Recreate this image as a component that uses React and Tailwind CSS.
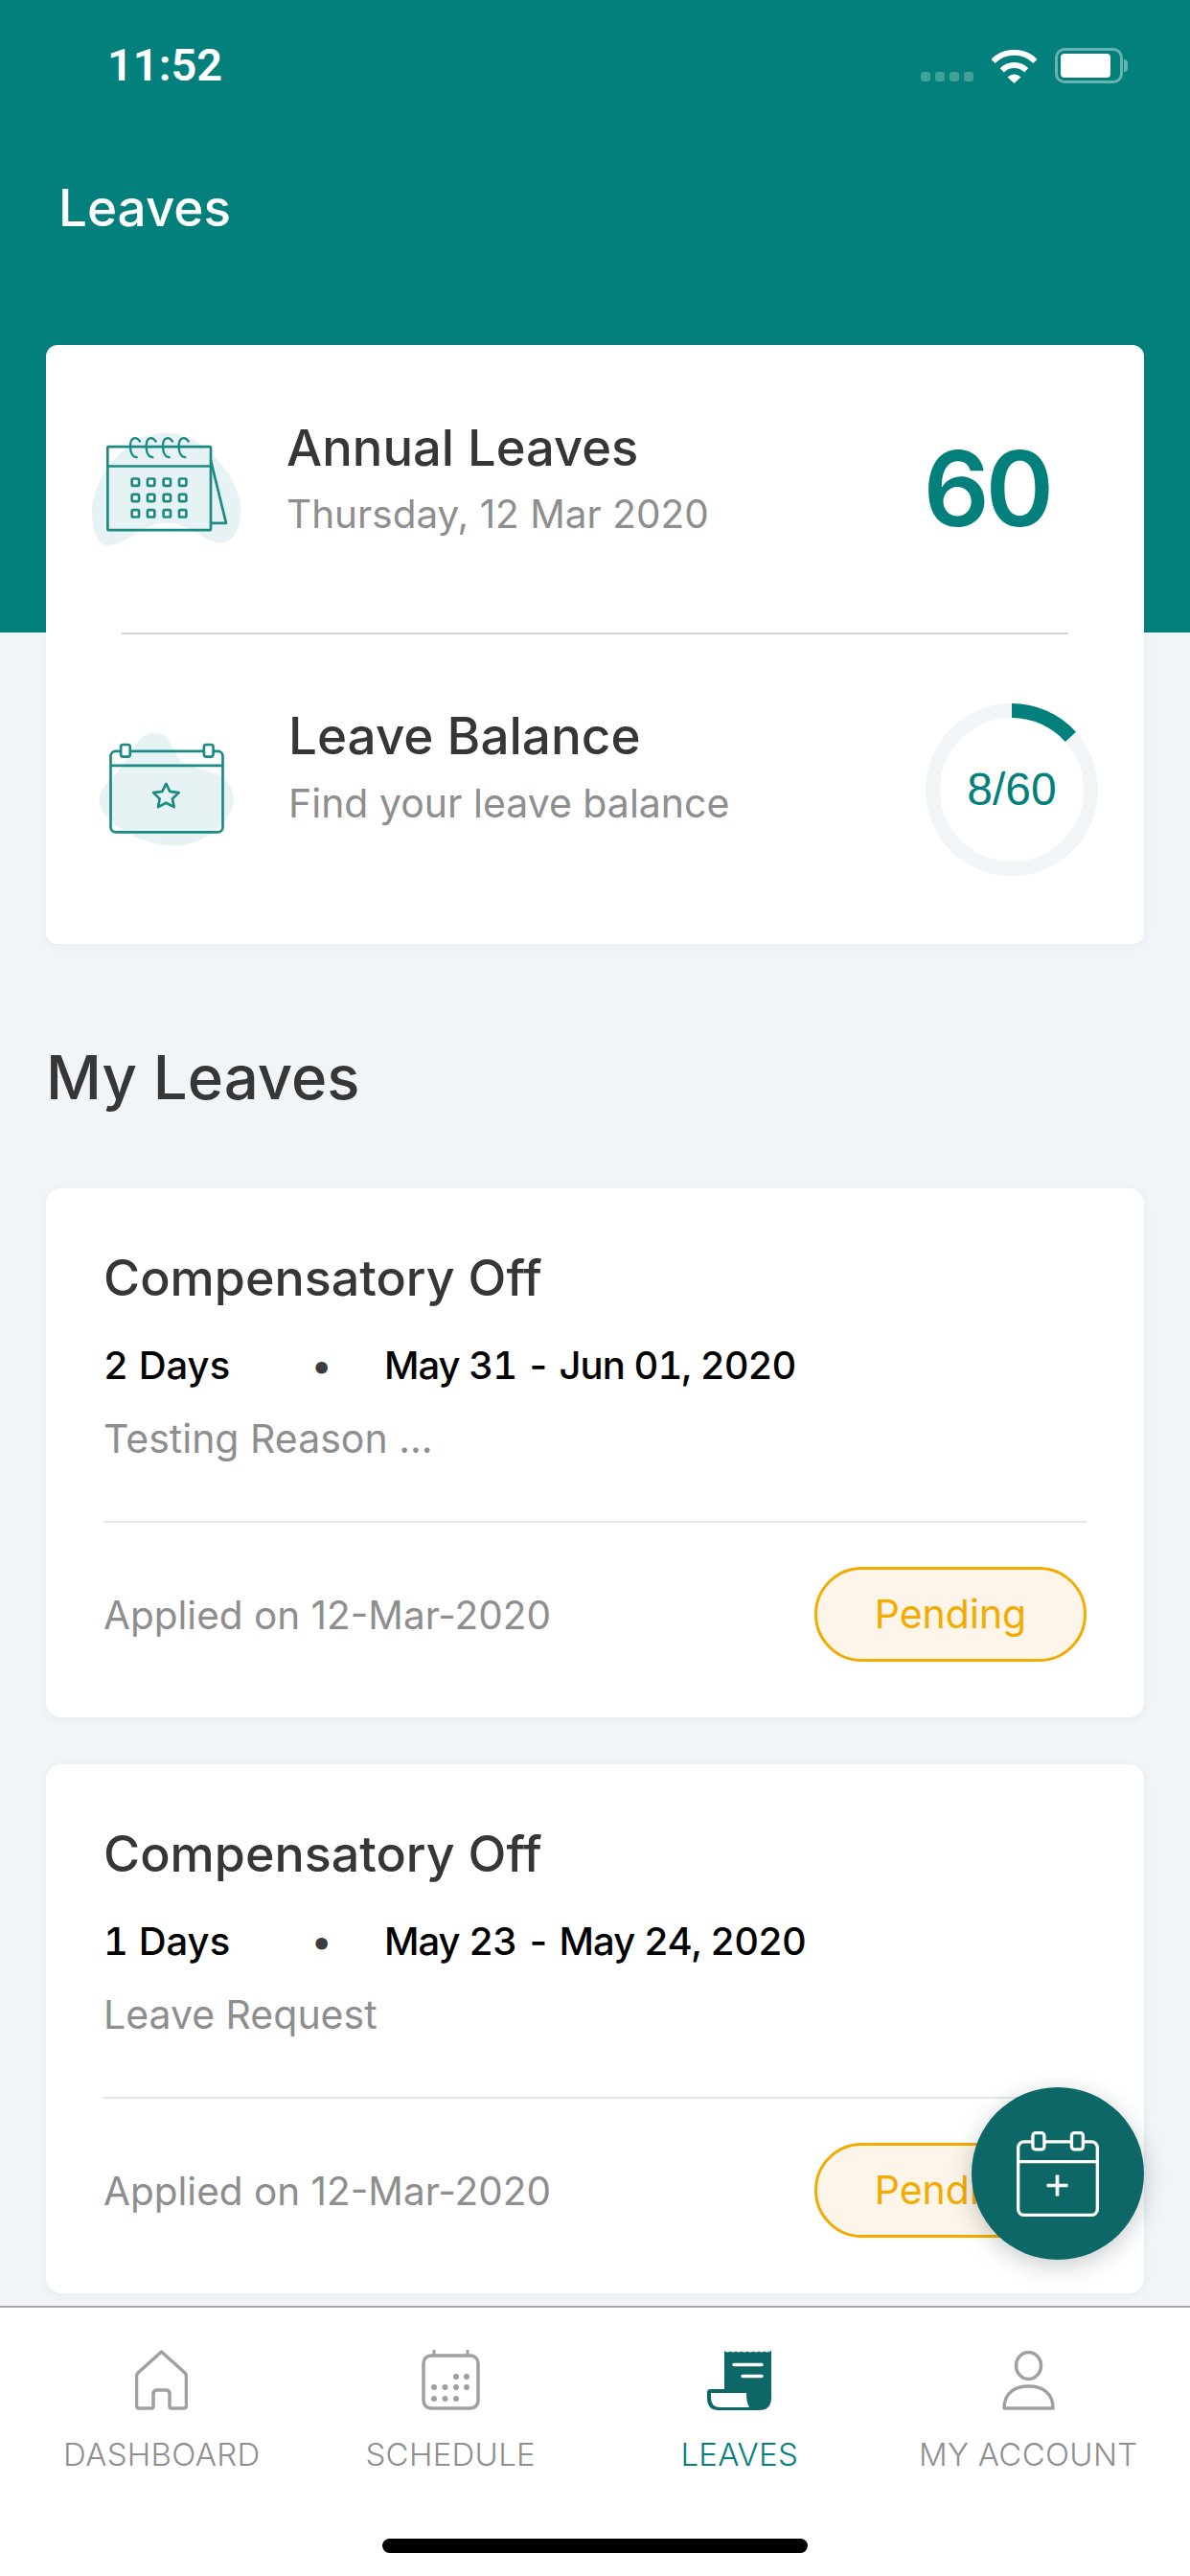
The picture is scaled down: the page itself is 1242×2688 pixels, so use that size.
import React from 'react';

const leaves = [
  { days: '2 Days', range: 'May 31 - Jun 01, 2020', reason: 'Testing Reason ...' },
  { days: '1 Days', range: 'May 23 - May 24, 2020', reason: 'Leave Request' },
];

const StatusIcons = () => (
  <div className="flex items-end gap-[19px]">
    <div className="flex gap-[5px] mb-[2px]">
      {[0, 1, 2, 3].map((i) => (
        <span key={i} className="w-[10px] h-[10px] rounded-[3px] bg-white/25" />
      ))}
    </div>
    <svg width="47" height="35" viewBox="0 0 47 35" fill="none" className="ml-0">
      <path d="M1.5 12 A31 31 0 0 1 45.5 12" stroke="#fff" strokeWidth="6" />
      <path d="M10.8 21.3 A18 18 0 0 1 36.2 21.3" stroke="#fff" strokeWidth="6" />
      <path d="M23.5 35 L16.5 28.5 Q23.5 22.5 30.5 28.5 Z" fill="#fff" />
    </svg>
    <div className="flex items-center">
      <div className="w-[71px] h-[37px] rounded-[10px] border-[3px] border-white/40 p-[3px] pr-[10px]">
        <div className="w-full h-full bg-white rounded-[4px]" />
      </div>
      <div className="w-[4px] h-[13px] ml-[1px] bg-white/40 rounded-r-full" />
    </div>
  </div>
);

const AnnualIcon = () => (
  <svg width="156" height="119" viewBox="168 152 468 356" fill="none" className="shrink-0">
    <path d="M405 153 C520 155 636 300 634 400 C632 470 600 505 560 497 C510 485 470 435 400 435 C330 435 270 505 220 506 C180 505 168 450 168 395 C170 290 280 150 405 153Z" fill="#e6f2f3" />
    <rect x="217" y="197" width="323" height="261" rx="3" stroke="#1a8a84" strokeWidth="8" />
    <path d="M217 258 H540 M540 240 L588 436 H540" stroke="#1a8a84" strokeWidth="8" strokeLinejoin="round" />
    {[300, 350, 402, 452].map((x) => (
      <path key={x} d={`M${x + 18} 180 C${x + 8} 165 ${x - 12} 165 ${x - 12} 195 C${x - 12} 220 ${x - 2} 230 ${x + 8} 230`} stroke="#1a8a84" strokeWidth="7" strokeLinecap="round" />
    ))}
    {[308, 357, 406].map((y) =>
      [304, 353, 403, 452].map((x) => (
        <rect key={`${x}-${y}`} x={x - 11} y={y - 11} width="22" height="22" rx="4" fill="#fff" stroke="#1a8a84" strokeWidth="8" />
      ))
    )}
  </svg>
);

const BalanceIcon = () => (
  <svg width="142" height="118" viewBox="190 195 424 355" fill="none" className="shrink-0">
    <path d="M365 195 C420 195 420 260 450 285 C490 310 560 310 590 345 C625 390 615 440 575 480 C530 530 470 552 415 548 C360 545 300 525 250 490 C205 460 185 420 191 400 C195 360 240 330 270 290 C295 250 310 195 365 195Z" fill="#e6f2f3" />
    <rect x="226" y="252" width="352" height="254" rx="16" stroke="#1a8a84" strokeWidth="8" />
    <path d="M226 297 H578" stroke="#1a8a84" strokeWidth="8" />
    <rect x="258" y="231" width="29" height="38" rx="7" fill="#fff" stroke="#1a8a84" strokeWidth="8" />
    <rect x="519" y="231" width="29" height="38" rx="7" fill="#fff" stroke="#1a8a84" strokeWidth="8" />
    <polygon points="400,354 412,378 440,382 420,401 425,427 400,414 375,427 380,401 360,382 388,378" stroke="#1a8a84" strokeWidth="8" strokeLinejoin="round" />
  </svg>
);

const Ring = () => (
  <div className="relative w-[180px] h-[180px] shrink-0">
    <svg width="180" height="180" viewBox="0 0 180 180" fill="none" className="-rotate-90">
      <circle cx="90" cy="90" r="82.5" stroke="#f1f5f8" strokeWidth="15" />
      <circle cx="90" cy="90" r="82.5" stroke="#03807c" strokeWidth="15" strokeDasharray="69.1 449.3" />
    </svg>
    <div className="absolute inset-0 flex items-center justify-center text-[48px] text-[#03807c] font-['Liberation_Sans',sans-serif]">
      8/60
    </div>
  </div>
);

const LeaveCard = ({ days, range, reason }) => (
  <div className="h-[552px] bg-white rounded-[16px] shadow-[0_2px_10px_rgba(40,60,80,0.06)] px-[60px] pt-[62px]">
    <h3 className="text-[52px] leading-[64px] font-medium text-[#363636]">Compensatory Off</h3>
    <div className="flex items-center mt-[34px] text-[40px] leading-[50px] font-medium text-black tabular-nums">
      <span className="w-[217px]">{days}</span>
      <span className="w-[76px] text-[#3c3c3c]">•</span>
      <span className="tracking-[-1px]">{range}</span>
    </div>
    <p className="mt-[26px] text-[41px] leading-[50px] text-[#8e8e8e]">{reason}</p>
    <div className="mt-[61px] h-[2px] bg-[#e6e6e6]" />
    <div className="flex items-center justify-between mt-[46px]">
      <span className="mt-[3px] text-[40.5px] text-[#8e8e8e]">Applied on 12-Mar-2020</span>
      <span className="w-[284px] h-[99px] flex items-center justify-center rounded-full border-[3px] border-[#f4ab00] bg-[#fdf5ea] text-[41px] text-[#f4ab00]">
        Pending
      </span>
    </div>
  </div>
);

const HomeIcon = () => (
  <svg width="55" height="63" viewBox="0 0 55 63" fill="none" stroke="#a0a0a0" strokeWidth="3.5" strokeLinejoin="round">
    <path d="M27.5 2 L52 24 Q53.5 25.5 53.5 28 V58 Q53.5 61 51 61 H38 Q36 61 36 59 V46 Q36 42 32 42 H23 Q19 42 19 46 V59 Q19 61 17 61 H4 Q1.5 61 1.5 58 V28 Q1.5 25.5 3 24 Z" />
  </svg>
);

const ScheduleIcon = () => (
  <svg width="61" height="63" viewBox="0 0 61 63" fill="none">
    <rect x="2" y="6" width="57" height="55" rx="8" stroke="#a0a0a0" strokeWidth="3.5" />
    <path d="M13 0 V6 M48 0 V6" stroke="#a0a0a0" strokeWidth="3" />
    {[[36, 28], [47, 28], [13, 39], [24.5, 39], [36, 39], [47, 39], [13, 51], [24.5, 51], [36, 51]].map(([x, y]) => (
      <circle key={`${x}-${y}`} cx={x} cy={y} r="3" fill="#a0a0a0" />
    ))}
  </svg>
);

const ReceiptIcon = () => (
  <svg width="67" height="63" viewBox="0 0 67 63" fill="none">
    <path d="M18 1 Q21 3.5 24 1.5 Q27 3.5 30 1.5 Q33 3.5 36 1.5 Q39 3.5 42 1.5 Q45 3.5 48 1.5 Q51 3.5 54 1.5 Q57 3.5 60 1.5 Q63 3.5 67 1 V50 Q67 63 54 63 H12 Q0 63 0 50 V44 Q0 41 4 41 H18 Z" fill="#0e6767" />
    <path d="M4 45 H41 Q41 55 44 60 H14 Q4 60 4 50 Z" fill="#fff" />
    <path d="M28 15.5 H57 M37 27.5 H57" stroke="#fff" strokeWidth="3.5" strokeLinecap="round" />
  </svg>
);

const AccountIcon = () => (
  <svg width="55" height="62" viewBox="0 0 55 62" fill="none" stroke="#a0a0a0" strokeWidth="3.5" strokeLinejoin="round">
    <ellipse cx="27.5" cy="15.5" rx="13" ry="14" />
    <path d="M2 60 C2 44 13 37 27.5 37 C42 37 53 44 53 60 Z" />
  </svg>
);

const tabs = [
  { label: 'DASHBOARD', icon: <HomeIcon /> },
  { label: 'SCHEDULE', icon: <ScheduleIcon /> },
  { label: 'LEAVES', icon: <ReceiptIcon />, active: true },
  { label: 'MY ACCOUNT', icon: <AccountIcon /> },
];

export default function App() {
  return (
    <div className="relative w-[1242px] h-[2688px] overflow-hidden flex flex-col bg-[#f1f5f8] font-['Inter',sans-serif]">
      <header className="h-[660px] shrink-0 bg-[#03807c] text-white">
        <div className="flex items-center justify-between pl-[112px] pr-[65px] pt-[46px]">
          <span className="text-[47px] leading-[44px] font-semibold font-['Roboto',sans-serif]">11:52</span>
          <StatusIcons />
        </div>
        <h1 className="pl-[61px] mt-[95px] text-[53px] leading-[64px] font-medium">Leaves</h1>
      </header>

      <main className="relative flex-1 min-h-0 -mt-[300px] px-[48px] overflow-hidden">
        <section className="h-[625px] bg-white rounded-[12px] shadow-[0_2px_10px_rgba(40,60,80,0.06)]">
          <div className="h-[300px] flex items-center pl-[48px] pr-[98px]">
            <AnnualIcon />
            <div className="flex-1 ml-[47px] pb-[24px]">
              <h2 className="text-[52.5px] leading-[64px] font-medium text-[#363636]">Annual Leaves</h2>
              <p className="mt-[13px] text-[40.5px] leading-[50px] text-[#8e8e8e]">Thursday, 12 Mar 2020</p>
            </div>
            <span className="text-[108px] leading-none font-semibold tracking-[-4px] text-[#03807c]">60</span>
          </div>
          <div className="mx-[79px] h-[2px] bg-[#d4d4d4]" />
          <div className="h-[323px] flex items-center pl-[55px] pr-[48px]">
            <BalanceIcon />
            <div className="flex-1 ml-[56px] pb-[48px]">
              <h2 className="text-[53px] leading-[64px] font-medium text-[#363636]">Leave Balance</h2>
              <p className="mt-[13px] text-[41px] leading-[50px] text-[#8e8e8e]">Find your leave balance</p>
            </div>
            <Ring />
          </div>
        </section>

        <h2 className="mt-[98px] mb-[75px] text-[63.5px] leading-[82px] font-medium text-[#363636]">My Leaves</h2>

        <div className="flex flex-col gap-[49px]">
          {leaves.map((l) => (
            <LeaveCard key={l.range} {...l} />
          ))}
        </div>
      </main>

      <nav className="h-[282px] shrink-0 bg-white border-t-2 border-[#a8a8a8] relative">
        <div className="grid grid-cols-4 pt-[44px] px-[18px]">
          {tabs.map((t) => (
            <div key={t.label} className="flex flex-col items-center">
              <div className="h-[63px] flex items-center">{t.icon}</div>
              <span className={`mt-[26px] text-[33px] leading-[40px] tracking-[0.3px] font-light ${t.active ? 'text-[#03807c]' : 'text-[#8f8f8f]'}`}>
                {t.label}
              </span>
            </div>
          ))}
        </div>
        <div className="absolute left-[399px] bottom-[24px] w-[444px] h-[15px] rounded-full bg-black" />
      </nav>

      <button className="absolute left-[1014px] top-[2178px] w-[180px] h-[180px] rounded-full bg-[#0e6767] flex items-center justify-center shadow-[0_6px_24px_rgba(30,50,60,0.25)]">
        <svg width="86" height="89" viewBox="783 220 259 268" fill="none" stroke="#fff" strokeWidth="10">
          <rect x="788" y="253" width="249" height="230" rx="18" />
          <path d="M788 315 H1037" />
          <rect x="834" y="225" width="36" height="52" rx="9" fill="#0e6767" />
          <rect x="956" y="225" width="36" height="52" rx="9" fill="#0e6767" />
          <path d="M878 390 H944 M911 357 V423" strokeWidth="11" />
        </svg>
      </button>
    </div>
  );
}
